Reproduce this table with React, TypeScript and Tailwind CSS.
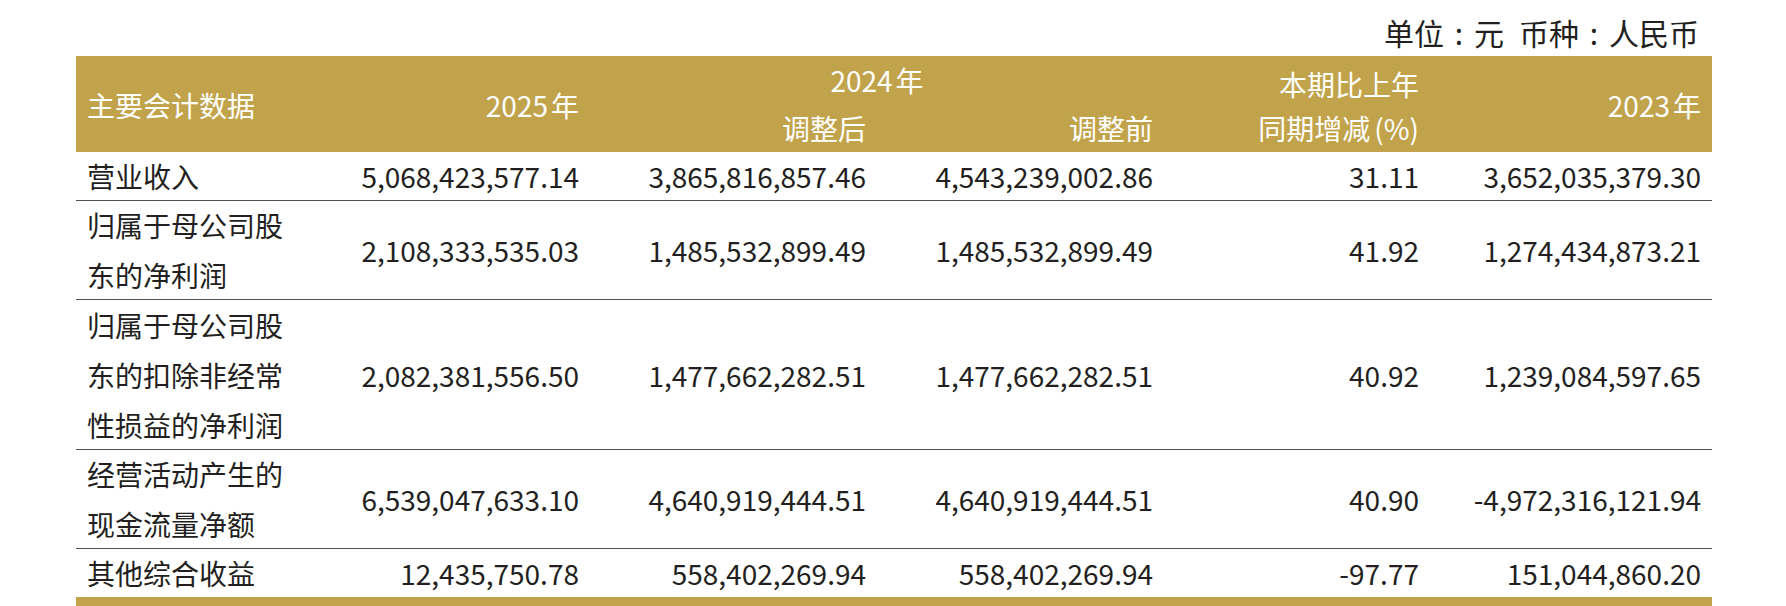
import React from "react";

const widths = [226, 288, 287, 287, 266, 282];

type Row = { label: string[]; values: string[]; h: string; border: boolean };

const rows: Row[] = [
  { label: ["营业收入"], values: ["5,068,423,577.14", "3,865,816,857.46", "4,543,239,002.86", "31.11", "3,652,035,379.30"], h: "h-[49px]", border: true },
  { label: ["归属于母公司股", "东的净利润"], values: ["2,108,333,535.03", "1,485,532,899.49", "1,485,532,899.49", "41.92", "1,274,434,873.21"], h: "h-[99px]", border: true },
  { label: ["归属于母公司股", "东的扣除非经常", "性损益的净利润"], values: ["2,082,381,556.50", "1,477,662,282.51", "1,477,662,282.51", "40.92", "1,239,084,597.65"], h: "h-[150px]", border: true },
  { label: ["经营活动产生的", "现金流量净额"], values: ["6,539,047,633.10", "4,640,919,444.51", "4,640,919,444.51", "40.90", "-4,972,316,121.94"], h: "h-[99px]", border: true },
  { label: ["其他综合收益"], values: ["12,435,750.78", "558,402,269.94", "558,402,269.94", "-97.77", "151,044,860.20"], h: "h-[48px]", border: false },
];

function Colon() {
  return <span className="inline-block w-[30px] text-center">:</span>;
}

function Year({ y }: { y: string }) {
  return (
    <span>
      {y}
      <span className="ml-[3px]">年</span>
    </span>
  );
}

export default function App() {
  return (
    <div
      className="w-[1786px] h-[606px] bg-white overflow-hidden text-[#231f20]"
      style={{ fontFamily: '"Noto Sans CJK SC", "Noto Sans", sans-serif' }}
    >
      <div className="h-[56px] flex justify-end items-start pr-[87px] pt-[12px] text-[30px] leading-[40px]">
        <span>
          单位<Colon />元<span className="inline-block w-[15px]" />币种<Colon />人民币
        </span>
      </div>
      <div className="ml-[76px] w-[1636px]">
        {/* header */}
        <div className="h-[96px] bg-[#c1a34b] text-white text-[28px] flex">
          <div className="w-[226px] flex items-center pl-[11px] pt-[2px]">主要会计数据</div>
          <div className="w-[288px] flex items-center justify-end pr-[11px] pt-[2px]">
            <Year y="2025" />
          </div>
          <div className="w-[574px] flex flex-col leading-[48px]">
            <div className="text-center">
              <Year y="2024" />
            </div>
            <div className="flex">
              <div className="w-[287px] text-right pr-[11px]">调整后</div>
              <div className="w-[287px] text-right pr-[11px]">调整前</div>
            </div>
          </div>
          <div className="w-[266px] flex flex-col items-end pr-[11px] pt-[6px] leading-[44px]">
            <div>本期比上年</div>
            <div>
              同期增减<span className="ml-[4px]">(%)</span>
            </div>
          </div>
          <div className="w-[282px] flex items-center justify-end pr-[11px] pt-[2px]">
            <Year y="2023" />
          </div>
        </div>
        {/* rows */}
        {rows.map((r, i) => (
          <div
            key={i}
            className={`flex text-[28px] leading-[50px] ${r.h} ${r.border ? "border-b border-[#505050]" : ""}`}
          >
            <div className="w-[226px] flex flex-col justify-center pl-[11px]">
              {r.label.map((l, j) => (
                <div key={j}>{l}</div>
              ))}
            </div>
            {r.values.map((v, j) => (
              <div
                key={j}
                className="flex items-center justify-end pr-[11px]"
                style={{ width: widths[j + 1] }}
              >
                {v}
              </div>
            ))}
          </div>
        ))}
        <div className="h-[9px] bg-[#c1a34b]" />
      </div>
    </div>
  );
}
